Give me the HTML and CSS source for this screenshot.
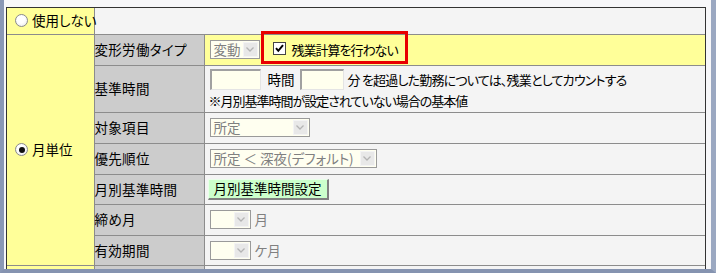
FILE: index.html
```html
<!DOCTYPE html>
<html lang="ja">
<head>
<meta charset="utf-8">
<title>設定</title>
<link rel="stylesheet" href="styles.css">
</head>
<body>
<div class="frame">
  <div class="panel">
    <table class="grid">
      <colgroup><col class="c1"><col class="c2"><col class="c3"></colgroup>
      <tr class="h26">
        <td class="opt"><div class="line"><span class="radio"></span><span class="opt-lbl">使用しない</span></div></td>
        <td class="val" colspan="2"></td>
      </tr>
      <tr class="h31">
        <td class="opt" rowspan="7"><div class="line"><span class="radio on"></span><span class="opt-lbl">月単位</span></div></td>
        <td class="lbl">変形労働タイプ</td>
        <td class="val hl">
          <div class="line">
            <span class="sel w50"><span class="sel-text">変動</span><span class="sel-arrow"><svg width="8" height="5" viewBox="0 0 8 5"><path d="M0.5 0.5 L4 4 L7.5 0.5" fill="none" stroke="#b4b4b4" stroke-width="1.3"/></svg></span></span>
            <span class="chk"><span class="box"><svg width="11" height="11" viewBox="0 0 11 11"><path d="M2 5.2 L4.3 7.8 L9 2.2" fill="none" stroke="#000" stroke-width="2"/></svg></span><span class="chk-text">残業計算を行わない</span></span>
          </div>
        </td>
      </tr>
      <tr class="h47">
        <td class="lbl">基準時間</td>
        <td class="val">
          <div class="line">
            <span class="inp w51"></span><span class="unit">時間</span><span class="inp w44"></span><span class="tail">分 を超過した勤務については、残業としてカウントする</span>
          </div>
          <div class="note">※月別基準時間が設定されていない場合の基本値</div>
        </td>
      </tr>
      <tr class="h31">
        <td class="lbl">対象項目</td>
        <td class="val"><div class="line"><span class="sel w100"><span class="sel-text">所定</span><span class="sel-arrow"><svg width="8" height="5" viewBox="0 0 8 5"><path d="M0.5 0.5 L4 4 L7.5 0.5" fill="none" stroke="#b4b4b4" stroke-width="1.3"/></svg></span></span></div></td>
      </tr>
      <tr class="h31">
        <td class="lbl">優先順位</td>
        <td class="val"><div class="line"><span class="sel w167"><span class="sel-text">所定 ＜ 深夜(デフォルト)</span><span class="sel-arrow"><svg width="8" height="5" viewBox="0 0 8 5"><path d="M0.5 0.5 L4 4 L7.5 0.5" fill="none" stroke="#b4b4b4" stroke-width="1.3"/></svg></span></span></div></td>
      </tr>
      <tr class="h30">
        <td class="lbl">月別基準時間</td>
        <td class="val"><div class="line"><button class="btn" type="button">月別基準時間設定</button></div></td>
      </tr>
      <tr class="h31">
        <td class="lbl">締め月</td>
        <td class="val"><div class="line"><span class="sel w41"><span class="sel-text"></span><span class="sel-arrow"><svg width="8" height="5" viewBox="0 0 8 5"><path d="M0.5 0.5 L4 4 L7.5 0.5" fill="none" stroke="#b4b4b4" stroke-width="1.3"/></svg></span></span><span class="muted">月</span></div></td>
      </tr>
      <tr class="h30">
        <td class="lbl">有効期間</td>
        <td class="val"><div class="line"><span class="sel w41"><span class="sel-text"></span><span class="sel-arrow"><svg width="8" height="5" viewBox="0 0 8 5"><path d="M0.5 0.5 L4 4 L7.5 0.5" fill="none" stroke="#b4b4b4" stroke-width="1.3"/></svg></span></span><span class="muted">ケ月</span></div></td>
      </tr>
      <tr class="h47">
        <td class="opt"></td>
        <td class="lbl"></td>
        <td class="val top"><div class="line"><span class="inp w51"></span><span class="gap"></span><span class="inp w44"></span></div></td>
      </tr>
    </table>
  </div>
</div>
</body>
</html>
```

FILE: styles.css
```css
* { box-sizing: border-box; }

body {
  margin: 0;
  background: #ffffff;
  font-family: "Noto Sans CJK JP", "Noto Sans", sans-serif;
  font-size: 13px;
  color: #000;
  font-feature-settings: "palt";
}

.frame {
  width: 716px;
  height: 273px;
  overflow: hidden;
  background: #f7f7f9;
  border-left: 4px solid #8a98b5;
  border-right: 5px solid #9ba8c1;
  border-bottom: 4px solid #8593b0;
  padding: 7px 5px 0 2px;
}

.panel {
  border: 1px solid #333;
  background: #f4f4f4;
}

.grid {
  width: 100%;
  border-collapse: collapse;
  border-style: hidden;
  table-layout: fixed;
}

.grid td {
  border: 1px solid #8c8c8c;
  padding: 0;
  vertical-align: middle;
  line-height: 17px;
}

col.c1 { width: 87px; }
col.c2 { width: 110px; }

.h26 > td { height: 26px; }
.h30 > td { height: 30px; }
.h31 > td { height: 31px; }
.h47 > td { height: 47px; }

.opt { background: #ffff99; padding-left: 8px !important; }
.lbl { background: #cccccc; white-space: nowrap; font-size: 13.5px; letter-spacing: 0.3px; }
.val { background: #f4f4f4; padding: 0 5px !important; }
.val.hl { background: #ffff99; }
.val.top { vertical-align: top !important; padding-top: 3px !important; }

.line {
  display: flex;
  align-items: center;
  white-space: nowrap;
}

.radio {
  width: 13px;
  height: 13px;
  border-radius: 50%;
  border: 1px solid #8a8a8a;
  background: radial-gradient(circle at 45% 40%, #ffffff 40%, #e4e4e4 100%);
  margin-right: 3px;
  display: inline-flex;
  align-items: center;
  justify-content: center;
  flex: none;
}
.radio.on::before {
  content: "";
  width: 6px;
  height: 6px;
  border-radius: 50%;
  background: #111;
}
.opt-lbl { margin-left: 1px; font-size: 13.5px; }

.sel {
  display: inline-flex;
  align-items: center;
  height: 19px;
  border: 1px solid #9a9a9a;
  background: #fffff0;
  color: #808080;
  flex: none;
  font-size: 13.5px;
}
.sel-text { flex: 1; padding-left: 3px; line-height: 17px; }
.sel-arrow {
  width: 15px;
  height: 15px;
  margin: 1px;
  background: #e8e8e8;
  border: 1px solid #f4f4f4;
  display: flex;
  align-items: center;
  justify-content: center;
  flex: none;
}
.w41 { width: 41px; }
.w50 { width: 50px; }
.w100 { width: 100px; }
.w167 { width: 167px; }

.chk {
  position: relative;
  display: inline-flex;
  align-items: center;
  height: 29px;
  margin-left: 1px;
  padding: 0 10px 0 12px;
}
.chk::after {
  content: "";
  position: absolute;
  left: 0;
  right: 0;
  top: -4px;
  bottom: 0;
  border: 3px solid #e80000;
}
.chk-text { letter-spacing: -1px; }
.box {
  width: 13px;
  height: 13px;
  border: 1px solid #444;
  background: #fff;
  margin-right: 6px;
  display: inline-flex;
  align-items: center;
  justify-content: center;
  margin-top: -2px;
}

.inp {
  height: 21px;
  background: #ffffee;
  border-style: solid;
  border-width: 2px 1px 1px 2px;
  border-color: #a0a0a0 #e4e4e4 #e4e4e4 #a0a0a0;
  flex: none;
}
.w51 { width: 51px; }
.w44 { width: 44px; }
.unit { margin: 0 5px 0 7px; font-size: 13.5px; }
.gap { width: 38px; flex: none; }
.tail { margin-left: 4px; letter-spacing: -0.8px; }
.note { margin-top: 2px; margin-left: -1px; letter-spacing: -1px; }

.muted { color: #808080; margin-left: 4px; font-size: 13.5px; }

.btn {
  font: inherit;
  font-size: 13.5px;
  font-feature-settings: "palt";
  line-height: 17px;
  height: 21px;
  margin-left: -2px;
  padding: 0 5px;
  background: #ccffcc;
  color: #000;
  border-style: solid;
  border-width: 1px 2px 2px 1px;
  border-color: #eaffea #808080 #808080 #eaffea;
}
```
